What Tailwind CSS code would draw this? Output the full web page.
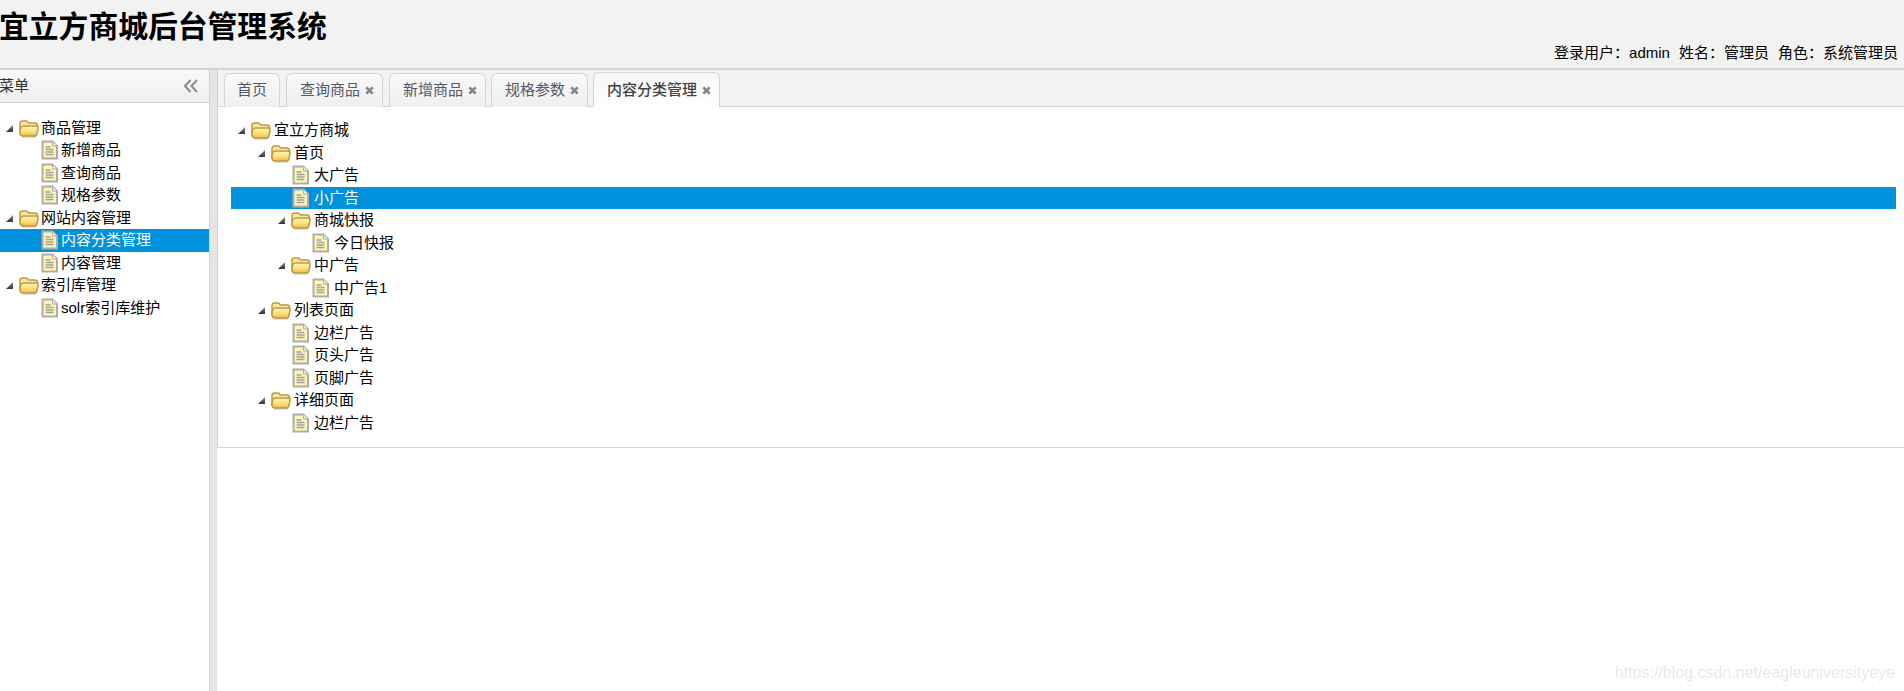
<!DOCTYPE html>
<html lang="zh-CN">
<head>
<meta charset="UTF-8">
<title>宜立方商城后台管理系统</title>
<script src="https://cdn.jsdelivr.net/npm/@tailwindcss/browser@4"></script>
</head>
<body class="relative h-screen overflow-hidden bg-white text-black text-[15px] font-['Liberation_Sans','Noto_Sans_CJK_SC',sans-serif]">

<!-- shared tree icons -->
<svg class="absolute w-0 h-0">
  <defs>
    <linearGradient id="fold" x1="0" y1="0" x2="0" y2="1"><stop offset="0" stop-color="#fff8c0"/><stop offset=".6" stop-color="#fbdc74"/><stop offset="1" stop-color="#eebb45"/></linearGradient>
    <linearGradient id="tri" x1="0" y1="0" x2="0" y2="1"><stop offset="0" stop-color="#888"/><stop offset="1" stop-color="#333"/></linearGradient>
    <symbol id="folder" viewBox="0 0 20 20">
      <path d="M1 14V5.500Q1 3 3.500 3h3.500q1.500 0 2.500 2h6.500q2.500 0 2.500 2.500V10H5z" fill="#f9e7a8" stroke="#c2993f" stroke-width="1.500"/>
      <path d="M1 14.500Q1 8 4.500 8h12q3 0 2.500 2.500l-1 5q-.5 2.500-2.500 2.500H4q-3 0-3-3.500z" fill="url(#fold)" stroke="#c2993f" stroke-width="1.500"/>
      <path d="M3 19h14" stroke="#888" stroke-opacity=".45"/>
    </symbol>
    <symbol id="file" viewBox="0 0 20 20">
      <path d="M2.500 1.500h10l4.500 4.500v12.500H2.500z" fill="#fdf5b8" stroke="#aeaea6" stroke-width="2"/>
      <path d="M12.500 1.500V6H17" fill="#ecece4" stroke="#aeaea6"/>
      <path d="M5.500 7h5M5.500 9.500h8M5.500 12h8M5.500 14.500h8" stroke="#a3a396" stroke-width="1.300"/>
    </symbol>
    <symbol id="arrow" viewBox="0 0 10 10">
      <path d="M9 2V9H2z" fill="url(#tri)"/>
    </symbol>
    <symbol id="x" viewBox="0 0 10 10">
      <path d="M1.500 1.500l7 7M8.500 1.500l-7 7" stroke="#7d8794" stroke-width="3"/>
    </symbol>
  </defs>
</svg>

<div class="flex flex-col h-full">
  <header class="relative h-[70px] shrink-0 bg-[#f2f2f2] border-b-2 border-[#d4d4d4]">
    <h1 class="-ml-px pt-[7px] text-[29.800px] leading-[40px] font-bold">宜立方商城后台管理系统</h1>
    <div class="absolute right-[6px] top-[42px] leading-[22px] flex gap-[9px]">
      <span>登录用户：admin</span><span>姓名：管理员</span><span>角色：系统管理员</span>
    </div>
  </header>

  <div class="flex flex-1 min-h-0">
    <aside class="w-[210px] shrink-0 border-r border-[#d4d4d4]">
      <div class="flex items-center justify-between h-[33px] pr-[11px] bg-linear-to-b from-[#f9f9f9] to-[#efefef] border-b border-[#d4d4d4] text-[#333]">
        <span class="-ml-px">菜单</span>
        <svg class="w-[14px] h-[14px]" viewBox="0 0 14 14" fill="none" stroke="#8a8a8a" stroke-width="2"><path d="M6.500 1 1 7l5.500 6M13 1 7.500 7l5.500 6"/></svg>
      </div>
      <ul class="pt-[13.500px]">
        <li class="flex items-center h-[22.500px] pl-[4px]"><svg class="w-[10px] h-[10px] mr-[5px]"><use href="#arrow"/></svg><svg class="w-[20px] h-[20px] mr-[2px]"><use href="#folder"/></svg>商品管理</li>
        <li class="flex items-center h-[22.500px] pl-[40px]"><svg class="w-[20px] h-[20px] mr-[1px]"><use href="#file"/></svg>新增商品</li>
        <li class="flex items-center h-[22.500px] pl-[40px]"><svg class="w-[20px] h-[20px] mr-[1px]"><use href="#file"/></svg>查询商品</li>
        <li class="flex items-center h-[22.500px] pl-[40px]"><svg class="w-[20px] h-[20px] mr-[1px]"><use href="#file"/></svg>规格参数</li>
        <li class="flex items-center h-[22.500px] pl-[4px]"><svg class="w-[10px] h-[10px] mr-[5px]"><use href="#arrow"/></svg><svg class="w-[20px] h-[20px] mr-[2px]"><use href="#folder"/></svg>网站内容管理</li>
        <li class="flex items-center h-[22.500px] pl-[40px] bg-[#0092dc] text-white"><svg class="w-[20px] h-[20px] mr-[1px]"><use href="#file"/></svg>内容分类管理</li>
        <li class="flex items-center h-[22.500px] pl-[40px]"><svg class="w-[20px] h-[20px] mr-[1px]"><use href="#file"/></svg>内容管理</li>
        <li class="flex items-center h-[22.500px] pl-[4px]"><svg class="w-[10px] h-[10px] mr-[5px]"><use href="#arrow"/></svg><svg class="w-[20px] h-[20px] mr-[2px]"><use href="#folder"/></svg>索引库管理</li>
        <li class="flex items-center h-[22.500px] pl-[40px]"><svg class="w-[20px] h-[20px] mr-[1px]"><use href="#file"/></svg>solr索引库维护</li>
      </ul>
    </aside>

    <div class="w-[7px] shrink-0 bg-[#e5e5e5]"></div>

    <main class="flex-1 min-w-0">
      <div class="border-l border-b border-[#d4d4d4]">
        <nav class="flex items-end h-[37px] pl-[6px] bg-[#f2f2f2] border-b border-[#d4d4d4] text-[#575765]">
          <a class="flex items-center justify-center w-[56px] h-[34px] -mb-px rounded-t-[6px] border border-b-0 border-[#d4d4d4] bg-linear-to-b from-[#f9f9f9] to-[#efefef]">首页</a>
          <a class="flex items-center w-[97px] h-[34px] -mb-px ml-[6px] pl-[13px] rounded-t-[6px] border border-b-0 border-[#d4d4d4] bg-linear-to-b from-[#f9f9f9] to-[#efefef]">查询商品<svg class="w-[9px] h-[9px] ml-[5px]"><use href="#x"/></svg></a>
          <a class="flex items-center w-[97px] h-[34px] -mb-px ml-[6px] pl-[13px] rounded-t-[6px] border border-b-0 border-[#d4d4d4] bg-linear-to-b from-[#f9f9f9] to-[#efefef]">新增商品<svg class="w-[9px] h-[9px] ml-[5px]"><use href="#x"/></svg></a>
          <a class="flex items-center w-[97px] h-[34px] -mb-px ml-[5px] pl-[13px] rounded-t-[6px] border border-b-0 border-[#d4d4d4] bg-linear-to-b from-[#f9f9f9] to-[#efefef]">规格参数<svg class="w-[9px] h-[9px] ml-[5px]"><use href="#x"/></svg></a>
          <a class="flex items-center w-[127px] h-[35px] -mb-px ml-[5px] pl-[13px] rounded-t-[6px] border border-b-0 border-[#d4d4d4] bg-linear-to-b from-[#f6f6f6] to-white font-medium text-[#444]">内容分类管理<svg class="w-[9px] h-[9px] ml-[5px]"><use href="#x"/></svg></a>
        </nav>
        <ul class="h-[340px] pt-[12px] pl-[13px] pr-[8px]">
          <li class="flex items-center h-[22.500px] pl-[5px]"><svg class="w-[10px] h-[10px] mr-[5px]"><use href="#arrow"/></svg><svg class="w-[20px] h-[20px] mr-[3px]"><use href="#folder"/></svg>宜立方商城</li>
          <li class="flex items-center h-[22.500px] pl-[25px]"><svg class="w-[10px] h-[10px] mr-[5px]"><use href="#arrow"/></svg><svg class="w-[20px] h-[20px] mr-[3px]"><use href="#folder"/></svg>首页</li>
          <li class="flex items-center h-[22.500px] pl-[60px]"><svg class="w-[20px] h-[20px] mr-[3px]"><use href="#file"/></svg>大广告</li>
          <li class="flex items-center h-[22.500px] pl-[60px] bg-[#0092dc] text-white"><svg class="w-[20px] h-[20px] mr-[3px]"><use href="#file"/></svg>小广告</li>
          <li class="flex items-center h-[22.500px] pl-[45px]"><svg class="w-[10px] h-[10px] mr-[5px]"><use href="#arrow"/></svg><svg class="w-[20px] h-[20px] mr-[3px]"><use href="#folder"/></svg>商城快报</li>
          <li class="flex items-center h-[22.500px] pl-[80px]"><svg class="w-[20px] h-[20px] mr-[3px]"><use href="#file"/></svg>今日快报</li>
          <li class="flex items-center h-[22.500px] pl-[45px]"><svg class="w-[10px] h-[10px] mr-[5px]"><use href="#arrow"/></svg><svg class="w-[20px] h-[20px] mr-[3px]"><use href="#folder"/></svg>中广告</li>
          <li class="flex items-center h-[22.500px] pl-[80px]"><svg class="w-[20px] h-[20px] mr-[3px]"><use href="#file"/></svg>中广告1</li>
          <li class="flex items-center h-[22.500px] pl-[25px]"><svg class="w-[10px] h-[10px] mr-[5px]"><use href="#arrow"/></svg><svg class="w-[20px] h-[20px] mr-[3px]"><use href="#folder"/></svg>列表页面</li>
          <li class="flex items-center h-[22.500px] pl-[60px]"><svg class="w-[20px] h-[20px] mr-[3px]"><use href="#file"/></svg>边栏广告</li>
          <li class="flex items-center h-[22.500px] pl-[60px]"><svg class="w-[20px] h-[20px] mr-[3px]"><use href="#file"/></svg>页头广告</li>
          <li class="flex items-center h-[22.500px] pl-[60px]"><svg class="w-[20px] h-[20px] mr-[3px]"><use href="#file"/></svg>页脚广告</li>
          <li class="flex items-center h-[22.500px] pl-[25px]"><svg class="w-[10px] h-[10px] mr-[5px]"><use href="#arrow"/></svg><svg class="w-[20px] h-[20px] mr-[3px]"><use href="#folder"/></svg>详细页面</li>
          <li class="flex items-center h-[22.500px] pl-[60px]"><svg class="w-[20px] h-[20px] mr-[3px]"><use href="#file"/></svg>边栏广告</li>
        </ul>
      </div>
    </main>
  </div>
</div>

<!-- blog watermark over the page -->
<div class="absolute right-[9px] bottom-[8px] text-[16px] leading-[20px] text-[#e8e8e8] blur-[0.4px]">https://blog.csdn.net/eagleuniversityeye</div>
</body>
</html>
